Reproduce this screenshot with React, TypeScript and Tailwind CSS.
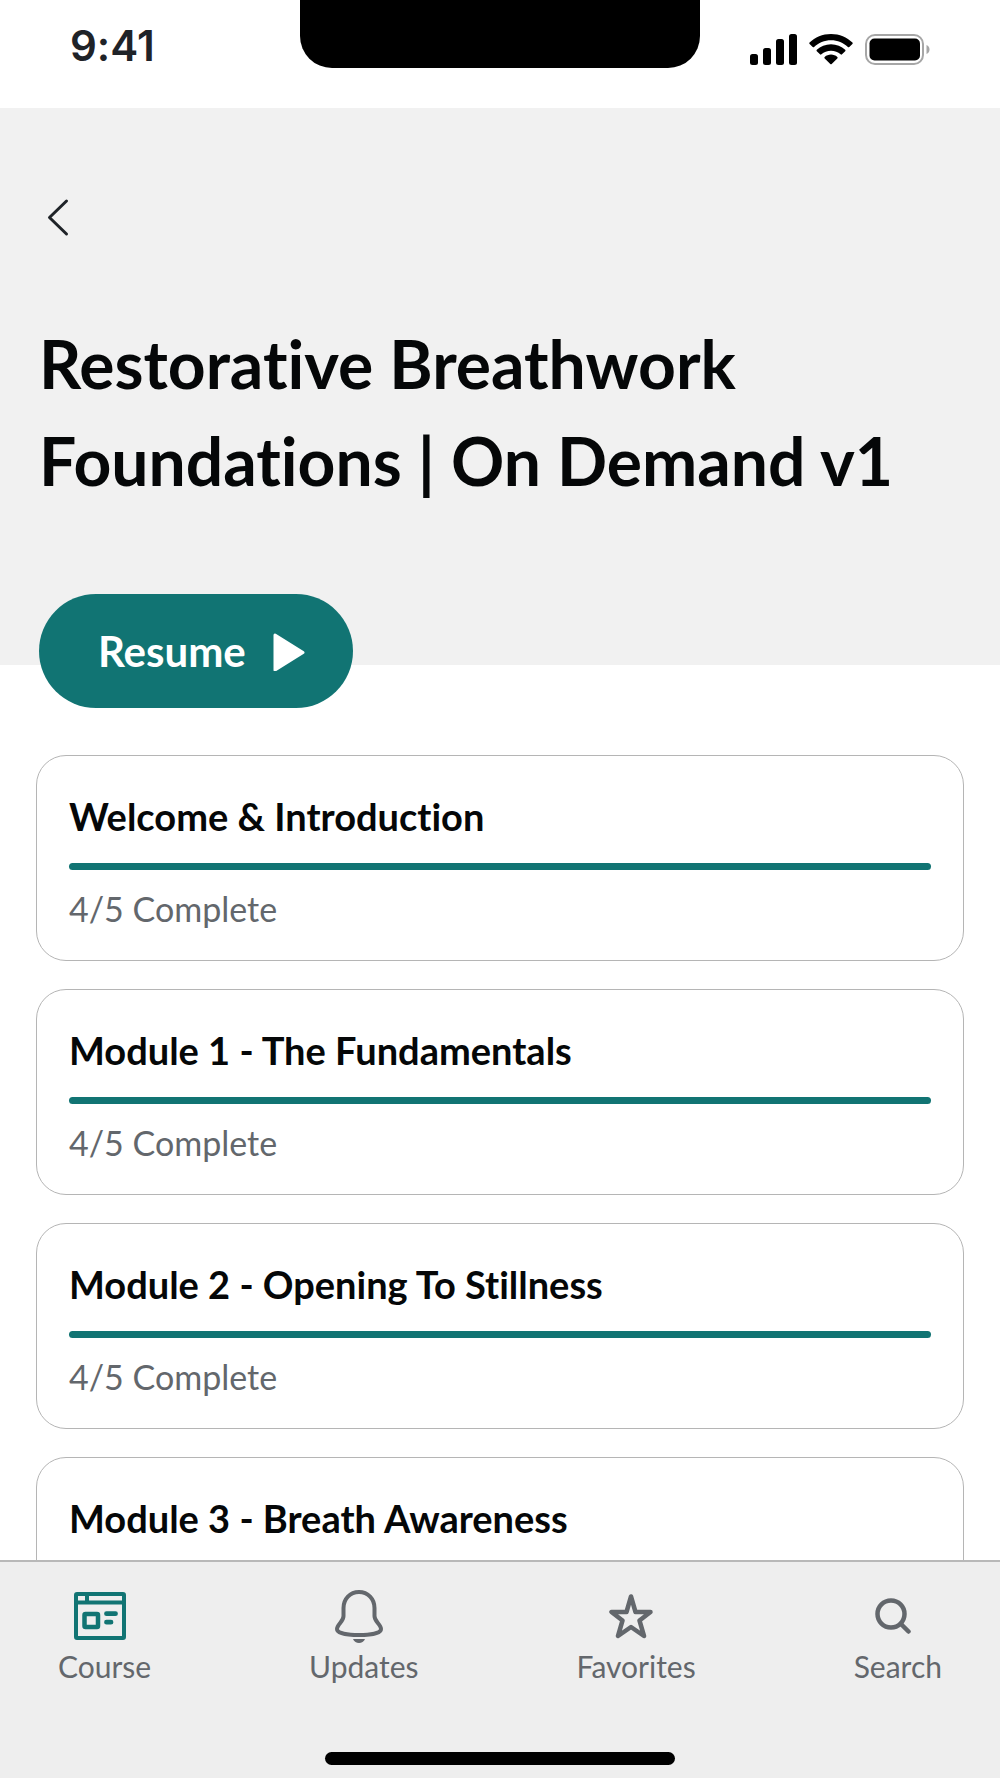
import type { ReactNode } from "react";

type Module = { title: string; progress?: string };

const modules: Module[] = [
  { title: "Welcome & Introduction", progress: "4/5 Complete" },
  { title: "Module 1 - The Fundamentals", progress: "4/5 Complete" },
  { title: "Module 2 - Opening To Stillness", progress: "4/5 Complete" },
  { title: "Module 3 - Breath Awareness" },
];

function StatusBar() {
  return (
    <div className="relative flex h-[108px] shrink-0 items-start justify-between bg-white px-[70px]">
      <span className="pt-[21px] font-['Inter',sans-serif] text-[42px] font-semibold leading-[50px] text-[#1f2328]">9:41</span>
      <div className="absolute left-1/2 top-0 h-[68px] w-2/5 -translate-x-1/2 rounded-b-[32px] bg-black" />
      <div className="flex items-center gap-[12px] pt-[33px]">
        <svg width="47" height="32" viewBox="0 0 47 32" aria-label="Signal">
          <rect x="0" y="21" width="8" height="11" rx="2.5" />
          <rect x="13" y="15" width="8" height="17" rx="2.5" />
          <rect x="26" y="6" width="8" height="26" rx="2.5" />
          <rect x="39" y="1" width="8" height="31" rx="2.5" />
        </svg>
        <svg width="44" height="32" viewBox="0 0 44 32" aria-label="Wi-Fi">
          <path d="M22 1C13.500 1 6 4.300.6 9.500a1 1 0 0 0 0 1.400L3.700 14a1 1 0 0 0 1.400 0C9.500 9.800 15.500 7.300 22 7.300S34.500 9.800 38.900 14a1 1 0 0 0 1.400 0l3.100-3.100a1 1 0 0 0 0-1.400C38 4.300 30.500 1 22 1Z" />
          <path d="M22 11.300c-5.500 0-10.500 2.100-14.200 5.500a1 1 0 0 0 0 1.400L11 21.300a1 1 0 0 0 1.400 0c2.600-2.300 5.900-3.600 9.600-3.600s7 1.300 9.600 3.600a1 1 0 0 0 1.400 0l3.200-3.100a1 1 0 0 0 0-1.400c-3.700-3.400-8.700-5.500-14.200-5.500Z" />
          <path d="M22 21.600c-2.400 0-4.600.9-6.300 2.300a1 1 0 0 0 0 1.500l5.600 5.600a1 1 0 0 0 1.400 0l5.600-5.600a1 1 0 0 0 0-1.500c-1.700-1.400-3.900-2.300-6.300-2.300Z" />
        </svg>
        <svg width="65" height="32" viewBox="0 0 65 32" aria-label="Battery">
          <rect x="1" y="2" width="57" height="29" rx="9" fill="none" stroke="#a6a6a6" strokeWidth="2" />
          <rect x="4.500" y="5.500" width="50.500" height="22" rx="5" />
          <path d="M61.500 12c4 1.500 4 7.500 0 9Z" fill="#a6a6a6" />
        </svg>
      </div>
    </div>
  );
}

function CourseCard({ title, progress }: Module) {
  return (
    <li className="rounded-[30px] border border-[#b5b5b5] bg-white px-[32px] pb-[29px] pt-[36px]">
      <h2 className="text-[38px] font-bold leading-[48px] text-[#050708]">{title}</h2>
      <div className="mt-[23px] h-[7px] rounded-full bg-[#117473]" />
      {progress && <p className="mt-[17px] text-[34px] leading-[44px] text-[#63676c]">{progress}</p>}
    </li>
  );
}

function NavItem({ label, children }: { label: string; children: ReactNode }) {
  return (
    <a href="#" className="flex flex-col items-center text-[#63676c]">
      <span className="flex h-[60px] items-center pr-[10px]">{children}</span>
      <span className="mt-[2px] text-[30px] leading-[36px]">{label}</span>
    </a>
  );
}

export default function App() {
  return (
    <div className="flex h-screen flex-col overflow-hidden bg-white font-['Lato',sans-serif] [font-variant-ligatures:none]">
      <StatusBar />
      <main className="min-h-0 flex-1 overflow-y-auto [scrollbar-width:none]">
        <header className="flex flex-col items-start bg-[#f1f1f1] px-[39px] pt-[84px]">
          <button type="button" aria-label="Back" className="block px-[8px]">
            <svg width="24" height="50" viewBox="0 0 24 50" fill="none" stroke="#1f2328" strokeWidth="3" strokeLinecap="round" strokeLinejoin="round">
              <path d="M19.500 9 2.500 25.500 19.500 42" />
            </svg>
          </button>
          <h1 className="mt-[73px] text-[66px] font-bold leading-[97px] text-[#050708]">
            Restorative Breathwork Foundations | On Demand v1
          </h1>
          <button type="button" className="-mb-[43px] mt-[85px] flex h-[114px] items-center gap-[26px] rounded-full bg-[#117473] pl-[59px] pr-[48px] text-white">
            <span className="text-[42px] font-bold leading-[52px]">Resume</span>
            <svg width="33" height="40" viewBox="0 0 33 40" fill="#fff" stroke="#fff" strokeWidth="3" strokeLinejoin="round">
              <path d="M3 4v35L31 21.500Z" />
            </svg>
          </button>
        </header>
        <ul className="flex flex-col gap-[28px] px-[36px] pt-[90px]">
          {modules.map((module) => (
            <CourseCard key={module.title} {...module} />
          ))}
        </ul>
      </main>
      <nav className="shrink-0 border-t-2 border-[#b8b8b8] bg-[#eeeeee]">
        <div className="flex justify-between px-[58px] pt-[24px]">
          <NavItem label="Course">
            <svg width="52" height="48" viewBox="0 0 52 48" fill="none" stroke="#117473" strokeWidth="4">
              <rect x="2" y="2" width="48" height="44" rx="1" />
              <path d="M2 10.500h48M13 2v8" />
              <rect x="10.500" y="22" width="13.500" height="13" rx="1" strokeWidth="4.500" />
              <path d="M32.500 21.700h9M32.500 30.200h4.500" strokeLinecap="round" strokeWidth="4.800" />
            </svg>
          </NavItem>
          <NavItem label="Updates">
            <svg width="48" height="54" viewBox="0 0 48 54" fill="none" stroke="currentColor" strokeWidth="4">
              <path d="M24 3C15 3 8.500 10 8.500 19v8c0 3-1.500 4.700-3.300 7C3 36.700 2 38.500 2 40c0 4.300 11 6 22 6s22-1.700 22-6c0-1.500-1-3.300-3.200-6-1.800-2.300-3.300-4-3.300-7v-8C39.500 10 33 3 24 3Z" />
              <path d="M18 50h12c-1 2.500-3.500 4-6 4s-5-1.500-6-4Z" fill="currentColor" stroke="none" />
            </svg>
          </NavItem>
          <NavItem label="Favorites">
            <svg width="44" height="46" viewBox="0 0 44 46" fill="none" stroke="currentColor" strokeWidth="4.500" strokeLinejoin="round">
              <path d="M22 3.500 26.500 19H41.500L30.500 27.500 35 43 22 34 9 43 13.500 27.500 2.500 19H17.500Z" />
            </svg>
          </NavItem>
          <NavItem label="Search">
            <svg width="36" height="38" viewBox="0 0 36 38" fill="none" stroke="currentColor" strokeWidth="4.500" strokeLinecap="round">
              <circle cx="16" cy="17" r="13.500" />
              <path d="m26 27 7.500 7.500" />
            </svg>
          </NavItem>
        </div>
        <div className="mx-auto mb-[13px] mt-[68px] h-[13px] w-[35%] rounded-full bg-black" />
      </nav>
    </div>
  );
}
